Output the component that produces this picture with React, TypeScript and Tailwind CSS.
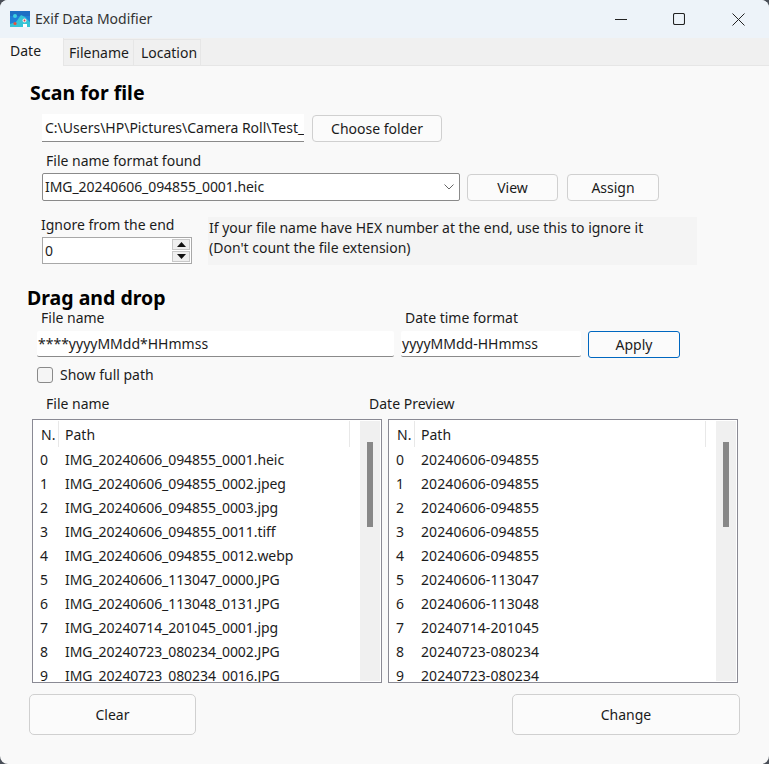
const font = "[font-family:'Noto_Sans',sans-serif]";

const names = [
  'IMG_20240606_094855_0001.heic',
  'IMG_20240606_094855_0002.jpeg',
  'IMG_20240606_094855_0003.jpg',
  'IMG_20240606_094855_0011.tiff',
  'IMG_20240606_094855_0012.webp',
  'IMG_20240606_113047_0000.JPG',
  'IMG_20240606_113048_0131.JPG',
  'IMG_20240714_201045_0001.jpg',
  'IMG_20240723_080234_0002.JPG',
  'IMG_20240723_080234_0016.JPG',
];
const dates = [
  '20240606-094855',
  '20240606-094855',
  '20240606-094855',
  '20240606-094855',
  '20240606-094855',
  '20240606-113047',
  '20240606-113048',
  '20240714-201045',
  '20240723-080234',
  '20240723-080234',
];

function Btn({ label, cls }: { label: string; cls: string }) {
  return (
    <div className={`flex items-center justify-center rounded-[4px] border border-[#d0d0d0] bg-[#fbfbfb] text-[#1a1a1a] ${cls}`}>
      {label}
    </div>
  );
}

function ListBox({ rows, textCls }: { rows: string[]; textCls: string }) {
  return (
    <div className="relative h-[264px] w-[350px] overflow-hidden border border-[#8a8a94] bg-white">
      <div className="flex h-[28px] pr-[21px] pt-[1px]">
        <div className="flex h-[26px] w-[26px] items-center border-r border-[#e8e8e8] pl-[8px] pt-[2px]">N.</div>
        <div className="flex h-[26px] flex-1 items-center border-r border-[#e8e8e8] pl-[6px] pt-[2px]">Path</div>
        <div className="w-[10px]" />
      </div>
      <div className="flex flex-col">
        {rows.map((r, i) => (
          <div key={i} className="flex h-[24px] items-center whitespace-nowrap">
            <span className="w-[32px] pl-[7px]">{i}</span>
            <span className={textCls}>{r}</span>
          </div>
        ))}
      </div>
      <div className="absolute top-[1px] right-[1px] bottom-[1px] w-[20px] bg-[#f0f0f0]">
        <div className="mx-auto mt-[21px] h-[85px] w-[6px] bg-[#888888]" />
      </div>
    </div>
  );
}

function AppIcon() {
  return (
    <svg width="20" height="16" viewBox="0 0 20 16" className="shrink-0">
      <rect width="20" height="16" fill="#1f7fd6" />
      <rect width="20" height="5" fill="#1d6fc4" />
      <circle cx="5" cy="5" r="2" fill="#3fd0e0" />
      <path d="M0 16 L0 13 L6 11 L11 4 L15 6 L20 11 L20 16 Z" fill="#35c4d6" />
      <circle cx="5" cy="12.5" r="1.6" fill="#e8503a" />
      <circle cx="14.5" cy="9.5" r="2" fill="#f4e6e6" />
      <circle cx="14.5" cy="9.5" r="0.9" fill="#d8404a" />
      <rect x="13" y="13" width="4" height="3" fill="#ffffff" />
    </svg>
  );
}

export default function App() {
  return (
    <div className={`h-[764px] w-[769px] overflow-hidden bg-[#4a4f58] text-[14px] leading-[20px] text-[#1c1c1c] ${font}`}>
      <div className="flex h-[764px] w-[769px] flex-col overflow-hidden rounded-lg bg-[#f9f9f9]">
        {/* Title bar */}
        <div className="flex h-[38px] items-center bg-[#edf3f9] pl-[10px]">
          <AppIcon />
          <span className="ml-[5px] text-[#333333]">Exif Data Modifier</span>
          <div className="ml-auto flex items-center pr-[24px]">
            <svg width="12" height="12" viewBox="0 0 12 12" className="mr-[46px]">
              <path d="M0 6.5H12" stroke="#222" strokeWidth="1" />
            </svg>
            <svg width="12" height="12" viewBox="0 0 12 12" className="mr-[47px]">
              <rect x="0.5" y="0.5" width="11" height="11" rx="1.5" fill="none" stroke="#222" strokeWidth="1.1" />
            </svg>
            <svg width="13" height="13" viewBox="0 0 13 13">
              <path d="M0.5 0.5L12.5 12.5M12.5 0.5L0.5 12.5" stroke="#222" strokeWidth="1" />
            </svg>
          </div>
        </div>

        {/* Tabs */}
        <div className="flex h-[28px] items-end border-b border-[#e6e6e6] bg-[#f0f0f0]">
          <div className="z-10 -mb-px flex h-[28px] w-[64px] items-start border-r border-[#e6e6e6] bg-[#f9f9f9] pl-[10px] pt-[3px]">Date</div>
          <div className="flex h-[26px] w-[70px] items-center justify-center border-r border-t border-[#e6e6e6] pl-[1px] pt-[1px]">Filename</div>
          <div className="flex h-[26px] w-[67px] items-center justify-center border-r border-t border-[#e6e6e6] pl-[4px] pt-[1px]">Location</div>
        </div>

        {/* Content */}
        <div className="flex flex-1 flex-col">
          <div className="mt-[13px] ml-[30px] h-[28px] text-[19.5px] font-bold leading-[28px] text-black">Scan for file</div>

          <div className="mt-[7px] ml-[42px] flex items-start gap-[8px]">
            <div className="flex h-[28px] w-[262px] items-center overflow-hidden whitespace-nowrap border-b border-[#8a8a8a] bg-white pl-[3px]">
              C:\Users\HP\Pictures\Camera Roll\Test_
            </div>
            <Btn label="Choose folder" cls="mt-[1px] h-[27px] w-[130px]" />
          </div>

          <div className="mt-[9px] ml-[46px] h-[20px]">File name format found</div>

          <div className="mt-[2px] ml-[42px] flex items-start">
            <div className="flex h-[28px] w-[418px] items-center justify-between rounded-[2px] border border-[#8a8a8a] bg-white pl-[2px] pr-[4px]">
              <span className="tracking-[-0.07px]">IMG_20240606_094855_0001.heic</span>
              <svg width="10" height="6" viewBox="0 0 10 6" className="mr-[1px]">
                <path d="M0.5 0.5L5 5L9.5 0.5" fill="none" stroke="#666" strokeWidth="1" />
              </svg>
            </div>
            <Btn label="View" cls="ml-[7px] mt-[1px] h-[27px] w-[91px]" />
            <Btn label="Assign" cls="ml-[9px] mt-[1px] h-[27px] w-[92px]" />
          </div>

          <div className="mt-[16px] ml-[41px] flex items-start">
            <div className="w-[151px]">
              <div className="mt-[-2px] h-[22px]">Ignore from the end</div>
              <div className="ml-[1px] flex h-[27px] w-[150px] items-center justify-between border border-[#a8a8a8] bg-white pl-[2px] pr-[1px]">
                <span>0</span>
                <div className="flex flex-col gap-[1px]">
                  <div className="flex h-[11px] w-[18px] items-center justify-center border border-[#c8c8c8] bg-[#efefef]">
                    <svg width="9" height="5" viewBox="0 0 9 5"><path d="M4.5 0L9 5H0Z" fill="#111" /></svg>
                  </div>
                  <div className="flex h-[11px] w-[18px] items-center justify-center border border-[#c8c8c8] bg-[#efefef]">
                    <svg width="9" height="5" viewBox="0 0 9 5"><path d="M4.5 5L9 0H0Z" fill="#111" /></svg>
                  </div>
                </div>
              </div>
            </div>
            <div className="ml-[16px] h-[48px] w-[489px] bg-[#f4f4f4] pl-[1px] pt-[1px]">
              If your file name have HEX number at the end, use this to ignore it
              <br />
              (Don't count the file extension)
            </div>
          </div>

          <div className="mt-[23px] ml-[27px] h-[20px] text-[19.5px] font-bold leading-[20px] text-black">Drag and drop</div>

          <div className="ml-[41px] flex h-[20px]">
            <span className="w-[364px]">File name</span>
            <span>Date time format</span>
          </div>

          <div className="mt-[3px] ml-[37px] flex items-start">
            <div className="flex h-[26px] w-[357px] items-center rounded-[2px] border-b border-[#8a8a8a] bg-white pl-[1px] pt-[1px]">****yyyyMMdd*HHmmss</div>
            <div className="ml-[7px] flex h-[26px] w-[180px] items-center rounded-[2px] border-b border-[#8a8a8a] bg-white pl-[1px] pt-[1px]">yyyyMMdd-HHmmss</div>
            <div className="ml-[7px] flex h-[27px] w-[92px] items-center justify-center rounded-[3px] border border-[#0067c0] bg-[#fbfbfb]">Apply</div>
          </div>

          <div className="mt-[8px] ml-[37px] flex h-[18px] items-center">
            <div className="h-[16px] w-[16px] rounded-[3px] border border-[#8a8a8a] bg-[#f5f5f5]" />
            <span className="ml-[7px]">Show full path</span>
          </div>

          <div className="mt-[10px] ml-[46px] flex h-[20px]">
            <span className="w-[323px]">File name</span>
            <span>Date Preview</span>
          </div>

          <div className="mt-[5px] ml-[32px] flex gap-[6px]">
            <ListBox rows={names} textCls="tracking-[-0.07px]" />
            <ListBox rows={dates} textCls="tracking-[0.1px]" />
          </div>

          <div className="mt-[11px] ml-[29px] flex">
            <Btn label="Clear" cls="h-[41px] w-[167px] rounded-[5px]" />
            <Btn label="Change" cls="ml-[316px] h-[41px] w-[228px] rounded-[5px]" />
          </div>
        </div>
      </div>
    </div>
  );
}
